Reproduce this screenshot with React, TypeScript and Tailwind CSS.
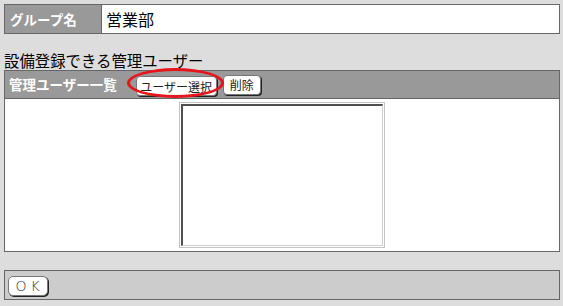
import React from "react";

const jp = { fontFamily: '"Noto Sans CJK JP", "Noto Sans", sans-serif' };

function OldButton({ children, className = "" }: { children: React.ReactNode; className?: string }) {
  return (
    <button
      className={`h-[20px] rounded-[4px] border border-[#777] bg-white text-[12px] leading-none text-[#222] shadow-[1px_1px_0_#222] ${className}`}
      style={jp}
    >
      {children}
    </button>
  );
}

export default function App() {
  return (
    <div className="h-[306px] w-[563px] bg-[#dddddd] pt-[4px] pl-[4px]" style={jp}>
      <div className="flex h-[30px] w-[556px] border border-[#666] bg-white">
        <div className="flex w-[97px] items-center border-r border-[#666] bg-[#999] pl-[5px] text-[13.5px] font-bold text-white">
          グループ名
        </div>
        <div className="flex flex-1 items-center pl-[4px] text-[16px] text-black">営業部</div>
      </div>

      <div className="mt-[16px] h-[20px] text-[15.4px] leading-[20px] text-black">設備登録できる管理ユーザー</div>

      <div className="w-[556px] border border-[#666] bg-white">
        <div className="flex h-[28px] items-center border-b border-[#666] bg-[#999] pl-[4px]">
          <span className="text-[13.5px] font-bold text-white">管理ユーザー一覧</span>
          <div className="relative ml-[19px]">
            <OldButton className="w-[81px] pt-[1px]">ユーザー選択</OldButton>
            <div className="pointer-events-none absolute left-[-9px] top-[-5px] h-[30px] w-[97px] rounded-[50%] border-[3px] border-[#e8141b]" />
          </div>
          <OldButton className="ml-[6px] w-[38px] pt-[1px]">削除</OldButton>
        </div>
        <div className="flex h-[152px] items-center justify-center">
          <div className="h-[146px] w-[206px] border border-[#c4c4c4] bg-white p-[1px]">
            <div className="h-full w-full border-t-2 border-l-2 border-r border-b border-t-[#505050] border-l-[#505050] border-r-[#cfcfcf] border-b-[#cfcfcf] bg-white" />
          </div>
        </div>
      </div>

      <div className="mt-[18px] flex h-[30px] w-[556px] items-center border border-[#666] bg-[#cccccc] pl-[3px]">
        <button
          className="mt-[2px] flex h-[20px] w-[40px] items-center justify-center rounded-[5px] border border-[#777] bg-white pl-[3px] text-[14px] leading-none tracking-[4px] text-[#333] shadow-[1px_1px_0_#222]"
          style={{ fontFamily: '"DejaVu Sans", sans-serif', fontWeight: 200 }}
        >
          OK
        </button>
      </div>
    </div>
  );
}
